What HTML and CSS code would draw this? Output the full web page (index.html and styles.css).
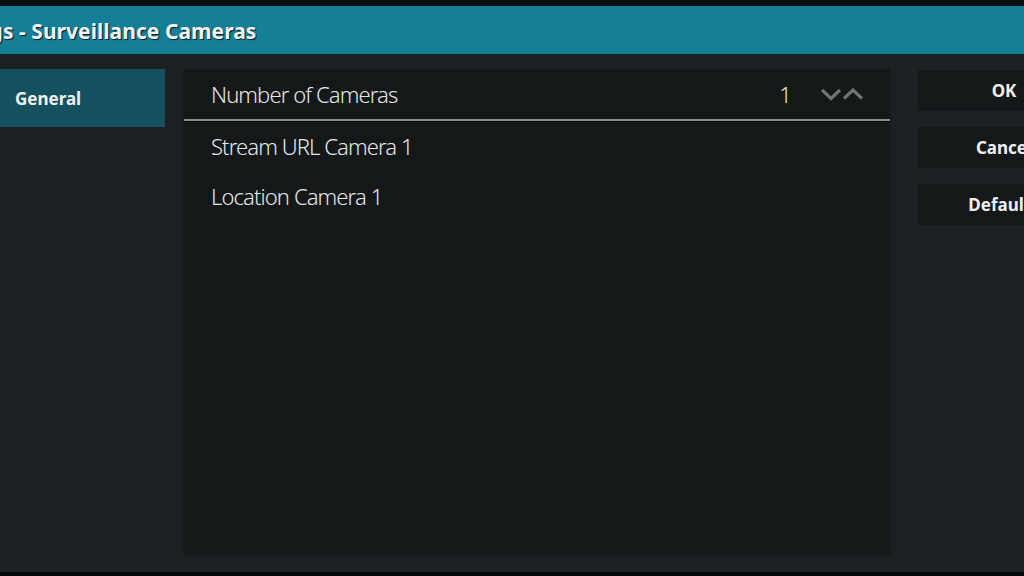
FILE: index.html
```html
<!DOCTYPE html>
<html>
<head>
<meta charset="utf-8">
<link rel="stylesheet" href="styles.css">
</head>
<body>
<div class="screen">
  <div class="topstrip"></div>
  <header class="header"><h1 class="title">Settings - Surveillance Cameras</h1></header>
  <main class="content">
    <nav class="sidebar">
      <div class="tab active">General</div>
    </nav>
    <section class="panel">
      <div class="row spinner">
        <span class="label">Number of Cameras</span>
        <span class="value">1</span>
        <span class="arrows">
          <svg width="44" height="14" viewBox="0 0 44 14"><path d="M1 3 L10 11.5 L19 3" fill="none" stroke="#707274" stroke-width="3.2"/><path d="M23 11.5 L32 3 L41 11.5" fill="none" stroke="#707274" stroke-width="3.2"/></svg>
        </span>
      </div>
      <div class="row"><span class="label">Stream URL Camera 1</span></div>
      <div class="row"><span class="label">Location Camera 1</span></div>
    </section>
    <aside class="buttons">
      <div class="btn">OK</div>
      <div class="btn">Cancel</div>
      <div class="btn">Defaults</div>
    </aside>
  </main>
  <div class="bottomstrip"></div>
</div>
</body>
</html>
```
FILE: styles.css
```css
html, body { margin: 0; padding: 0; }
body { background: #1c2123; font-family: "Noto Sans", "Open Sans", sans-serif; color: #fff; overflow: hidden; }
.screen { width: 1024px; height: 576px; display: flex; flex-direction: column; overflow: hidden; }
.topstrip { height: 6px; background: #0b0e0f; flex: none; }
.bottomstrip { height: 4px; background: #050708; flex: none; }
.header { height: 48px; flex: none; background: #167f98; display: flex; align-items: center; overflow: hidden; }
.title { margin: 2px 0 0 -73px; font-size: 21px; font-weight: 700; white-space: nowrap; text-shadow: 1px 1px 1px rgba(0,0,0,0.8); color: #f2f4f5; letter-spacing: 0.05px; }
.content { flex: 1; display: flex; padding-top: 15px; padding-bottom: 19px; overflow: hidden; }
.sidebar { width: 165px; flex: none; margin-right: 19px; }
.tab { height: 58px; display: flex; align-items: center; padding-left: 15px; font-size: 17px; font-weight: 700; color: #eef0f0; }
.tab.active { background: #15505f; }
.panel { width: 706px; flex: none; background: #141819; box-shadow: 0 2px 3px rgba(0,0,0,0.3); }
.row { height: 50px; display: flex; align-items: center; padding-left: 27px; font-size: 22px; font-weight: 300; color: #e4e6e7; letter-spacing: -0.9px; }
.row.spinner { height: 50px; border-bottom: 2px solid #8a8c8d; box-shadow: 0 1px 0 #0a0c0d; }
.label { flex: 1; }
.value { margin-right: 30px; }
.arrows { display: flex; margin-right: 25px; }
.buttons { margin-left: 28px; width: 172px; flex: none; display: flex; flex-direction: column; gap: 16px; padding-top: 1px; }
.btn { height: 41px; background: #141819; display: flex; align-items: center; justify-content: center; font-size: 17px; font-weight: 700; color: #eef0f0; flex: none; }
```
